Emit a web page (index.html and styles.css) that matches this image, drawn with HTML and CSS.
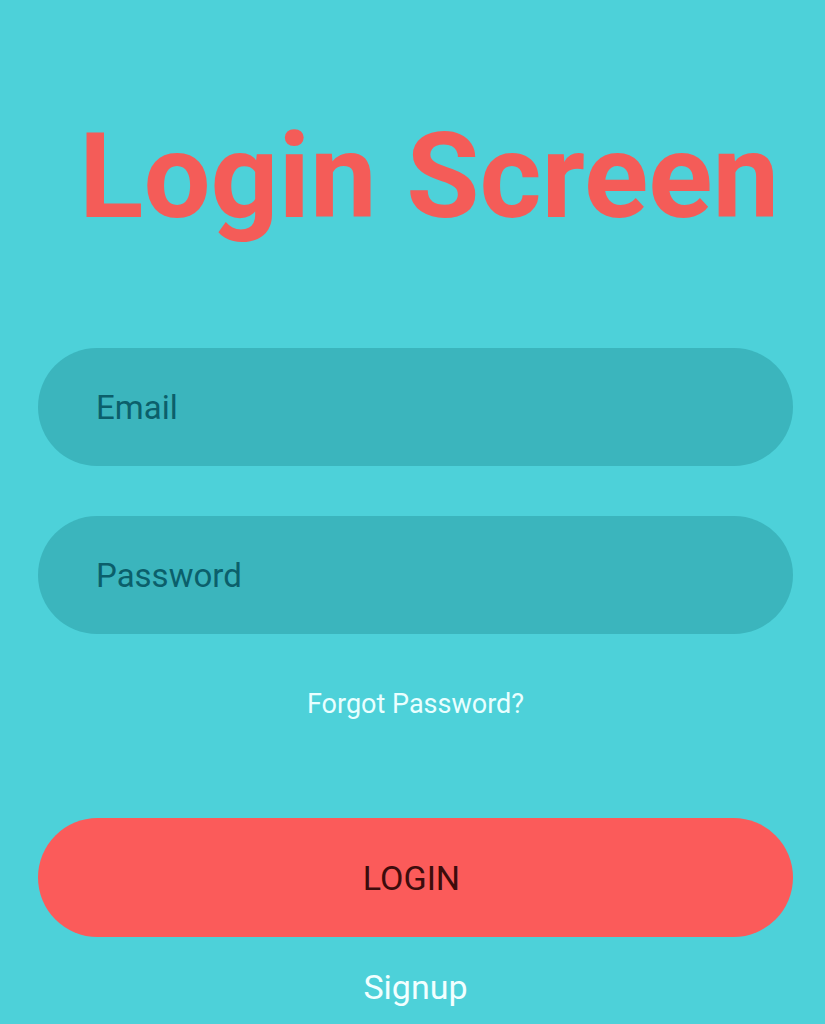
FILE: index.html
```html
<!DOCTYPE html>
<html>
<head>
<meta charset="utf-8">
<link rel="stylesheet" href="styles.css">
</head>
<body>
<main class="screen">
  <h1 class="title">Login Screen</h1>
  <div class="field"><span class="placeholder">Email</span></div>
  <div class="field field-second"><span class="placeholder">Password</span></div>
  <div class="forgot">Forgot Password?</div>
  <div class="login-btn">LOGIN</div>
  <div class="signup">Signup</div>
</main>
</body>
</html>
```
FILE: styles.css
```css
html, body {
  margin: 0;
  padding: 0;
  background: #4dd1d9;
}
body {
  font-family: Roboto, "Liberation Sans", sans-serif;
  height: 1024px;
  overflow: hidden;
}
.screen {
  display: flex;
  flex-direction: column;
  padding: 117px 32px 0 38px;
}
.title {
  margin: 0 0 111px 41px;
  font-size: 119px;
  line-height: 120px;
  font-weight: 700;
  color: #f45c58;
  white-space: nowrap;
}
.field {
  height: 118px;
  border-radius: 59px;
  background: #3bb5bd;
  display: flex;
  align-items: center;
  padding-left: 58px;
}
.field-second {
  margin-top: 50px;
}
.placeholder {
  font-size: 33px;
  color: #0b5f6b;
}
.forgot {
  margin-top: 52px;
  text-align: center;
  font-size: 27px;
  color: #e9ffff;
  line-height: 36px;
}
.login-btn {
  margin-top: 96px;
  height: 119px;
  border-radius: 60px;
  background: #fb5b5a;
  display: flex;
  align-items: center;
  justify-content: center;
  padding-right: 8px;
  font-size: 34px;
  color: #3d0c0c;
}
.signup {
  margin-top: 30px;
  text-align: center;
  font-size: 34px;
  color: #f2ffff;
  line-height: 40px;
}
```
